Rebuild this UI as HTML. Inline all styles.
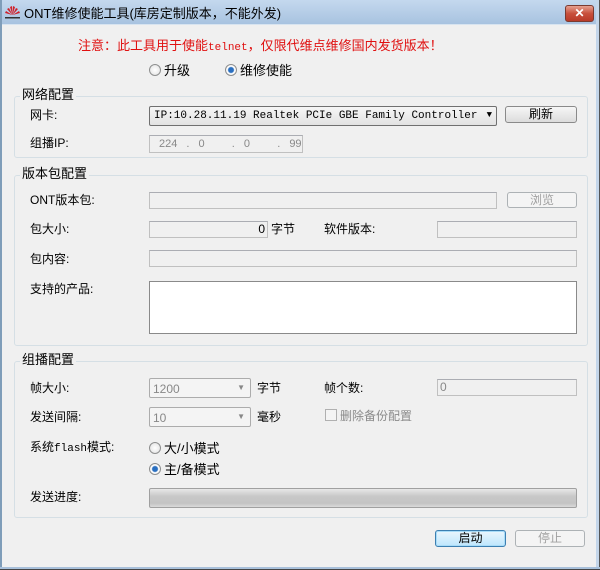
<!DOCTYPE html>
<html><head><meta charset="utf-8"><style>
*{box-sizing:border-box;margin:0;padding:0}
body{width:600px;height:570px;overflow:hidden;background:#f0f0f0;font-family:"Liberation Sans","Noto Sans CJK SC",sans-serif;font-size:12px;color:#000;position:relative}
.a{position:absolute;white-space:nowrap}
.title{left:0;top:0;width:600px;height:25px;background:linear-gradient(#c4d8ee,#a8c3e0);border-bottom:1px solid #d8e4f0}
.frameL{left:0;top:0;width:2px;height:570px;background:#7f9db9}
.frameR{right:0;top:0;width:4px;height:570px;background:#c4d6ea;border-right:1px solid #555}
.frameB{left:0;bottom:0;width:600px;height:3px;background:#a8c0da;border-bottom:1px solid #444}
.close{left:565px;top:5px;width:29px;height:17px;border:1px solid #7a3a30;border-radius:3px;background:linear-gradient(#e6a090,#c8503c 50%,#b83a28);color:#fff;font-weight:bold;font-size:12px;text-align:center;line-height:15px}
.grp{border:1px solid #d5dfe5;border-radius:3px}
.lbl{background:#f0f0f0;padding:0 2px}
.fld{border:1px solid #c0c0c0;background:#f0f0f0;border-top-color:#abadb3}
.btn{border:1px solid #8a8a8a;border-radius:3px;background:linear-gradient(#f6f6f6,#dcdcdc);text-align:center;line-height:14px}
.dis{border-color:#adb2b5;color:#a0a0a0;background:#f4f4f4}
.rad{width:12px;height:12px;border-radius:50%;border:1px solid #8e8f8f;background:radial-gradient(#fff,#e0e0e0)}
.rad.on{background:radial-gradient(#2a6fc0 0,#2a6fc0 2.5px,#fff 3.5px,#e8e8e8)}
.mono{font-family:"Liberation Mono","Noto Sans CJK SC",monospace;font-size:11px}
.cmb{border:1px solid #acacac;border-radius:2px;background:#f4f4f4;color:#888}
</style></head><body>
<div class="a title"></div>
<div class="a frameL"></div><div class="a frameR"></div><div class="a frameB"></div>
<div class="a" style="left:4px;top:5px;width:17px;height:14px">
<svg width="17" height="14" viewBox="0 0 17 14"><g fill="#d0202a"><path d="M8.5 10 L6 2 L8 1Z"/><path d="M8.5 10 L11 2 L9 1Z"/><path d="M8.5 10 L3 4 L5 3Z"/><path d="M8.5 10 L14 4 L12 3Z"/><path d="M8.5 10 L1 8 L2 6Z"/><path d="M8.5 10 L16 8 L15 6Z"/></g><rect x="1" y="12" width="15" height="1.5" fill="#333"/></svg></div>
<div class="a" style="left:24px;top:3px;font-size:13px">ONT维修使能工具(库房定制版本，不能外发)</div>
<div class="a close">✕</div>

<div class="a" style="left:78px;top:35px;color:#e01010;font-size:13px">注意：此工具用于使能<span class="mono">telnet</span>，仅限代维点维修国内发货版本！</div>
<div class="a rad" style="left:149px;top:64px"></div><div class="a" style="left:164px;top:60px;font-size:13px">升级</div>
<div class="a rad on" style="left:225px;top:64px"></div><div class="a" style="left:240px;top:60px;font-size:13px">维修使能</div>

<div class="a grp" style="left:14px;top:96px;width:574px;height:62px"></div>
<div class="a lbl" style="left:20px;top:84px;font-size:13px">网络配置</div>
<div class="a" style="left:30px;top:106px">网卡:</div>
<div class="a mono" style="left:149px;top:106px;width:348px;height:20px;border:1px solid #707070;border-radius:2px;background:linear-gradient(#f6f6f6,#e2e2e2);padding:3px 0 0 4px">IP:10.28.11.19 Realtek PCIe GBE Family Controller<span style="position:absolute;right:4px;top:3px;font-size:9px">▼</span></div>
<div class="a btn" style="left:505px;top:106px;width:72px;height:17px">刷新</div>
<div class="a" style="left:30px;top:134px">组播IP:</div>
<div class="a fld" style="left:149px;top:135px;width:154px;height:18px;color:#888;font-size:11px;padding:2px 0 0 9px;word-spacing:6px">224 . 0 &nbsp; . 0 &nbsp; . 99</div>

<div class="a grp" style="left:14px;top:175px;width:574px;height:171px"></div>
<div class="a lbl" style="left:20px;top:163px;font-size:13px">版本包配置</div>
<div class="a" style="left:30px;top:191px">ONT版本包:</div>
<div class="a fld" style="left:149px;top:192px;width:348px;height:17px"></div>
<div class="a btn dis" style="left:507px;top:192px;width:70px;height:16px">浏览</div>
<div class="a" style="left:30px;top:220px">包大小:</div>
<div class="a fld" style="left:149px;top:221px;width:119px;height:17px;text-align:right;padding-right:2px;line-height:15px">0</div>
<div class="a" style="left:271px;top:220px">字节</div>
<div class="a" style="left:324px;top:220px">软件版本:</div>
<div class="a fld" style="left:437px;top:221px;width:140px;height:17px"></div>
<div class="a" style="left:30px;top:250px">包内容:</div>
<div class="a fld" style="left:149px;top:250px;width:428px;height:17px"></div>
<div class="a" style="left:30px;top:280px">支持的产品:</div>
<div class="a" style="left:149px;top:281px;width:428px;height:53px;background:#fff;border:1px solid #8a8a8a"></div>

<div class="a grp" style="left:14px;top:361px;width:574px;height:157px"></div>
<div class="a lbl" style="left:20px;top:349px;font-size:13px">组播配置</div>
<div class="a" style="left:30px;top:379px">帧大小:</div>
<div class="a cmb" style="left:149px;top:378px;width:102px;height:20px;padding:3px 0 0 3px">1200<span style="position:absolute;right:5px;top:4px;font-size:8px">▼</span></div>
<div class="a" style="left:257px;top:379px">字节</div>
<div class="a" style="left:324px;top:379px">帧个数:</div>
<div class="a fld" style="left:437px;top:379px;width:140px;height:17px;color:#888;padding-left:2px;line-height:15px">0</div>
<div class="a" style="left:30px;top:408px">发送间隔:</div>
<div class="a cmb" style="left:149px;top:407px;width:102px;height:20px;padding:3px 0 0 3px">10<span style="position:absolute;right:5px;top:4px;font-size:8px">▼</span></div>
<div class="a" style="left:257px;top:408px">毫秒</div>
<div class="a" style="left:325px;top:409px;width:12px;height:12px;border:1px solid #b0b0b0;background:#f4f4f4"></div>
<div class="a" style="left:340px;top:407px;color:#8a8a8a">删除备份配置</div>
<div class="a" style="left:30px;top:438px">系统<span class="mono">flash</span>模式:</div>
<div class="a rad" style="left:149px;top:442px"></div><div class="a" style="left:164px;top:438px;font-size:13px">大/小模式</div>
<div class="a rad on" style="left:149px;top:463px"></div><div class="a" style="left:164px;top:459px;font-size:13px">主/备模式</div>
<div class="a" style="left:30px;top:488px">发送进度:</div>
<div class="a" style="left:149px;top:488px;width:428px;height:20px;border:1px solid #a0a0a0;border-radius:2px;background:linear-gradient(#e8e8e8,#c8c8c8 40%,#c4c4c4 80%,#dadada)"></div>

<div class="a btn" style="left:435px;top:530px;width:71px;height:17px;border-color:#3c7fb1;background:linear-gradient(#eaf6fd,#bee6fd);box-shadow:inset 0 0 0 1px #a8dcf8">启动</div>
<div class="a btn dis" style="left:515px;top:530px;width:70px;height:17px">停止</div>
</body></html>
